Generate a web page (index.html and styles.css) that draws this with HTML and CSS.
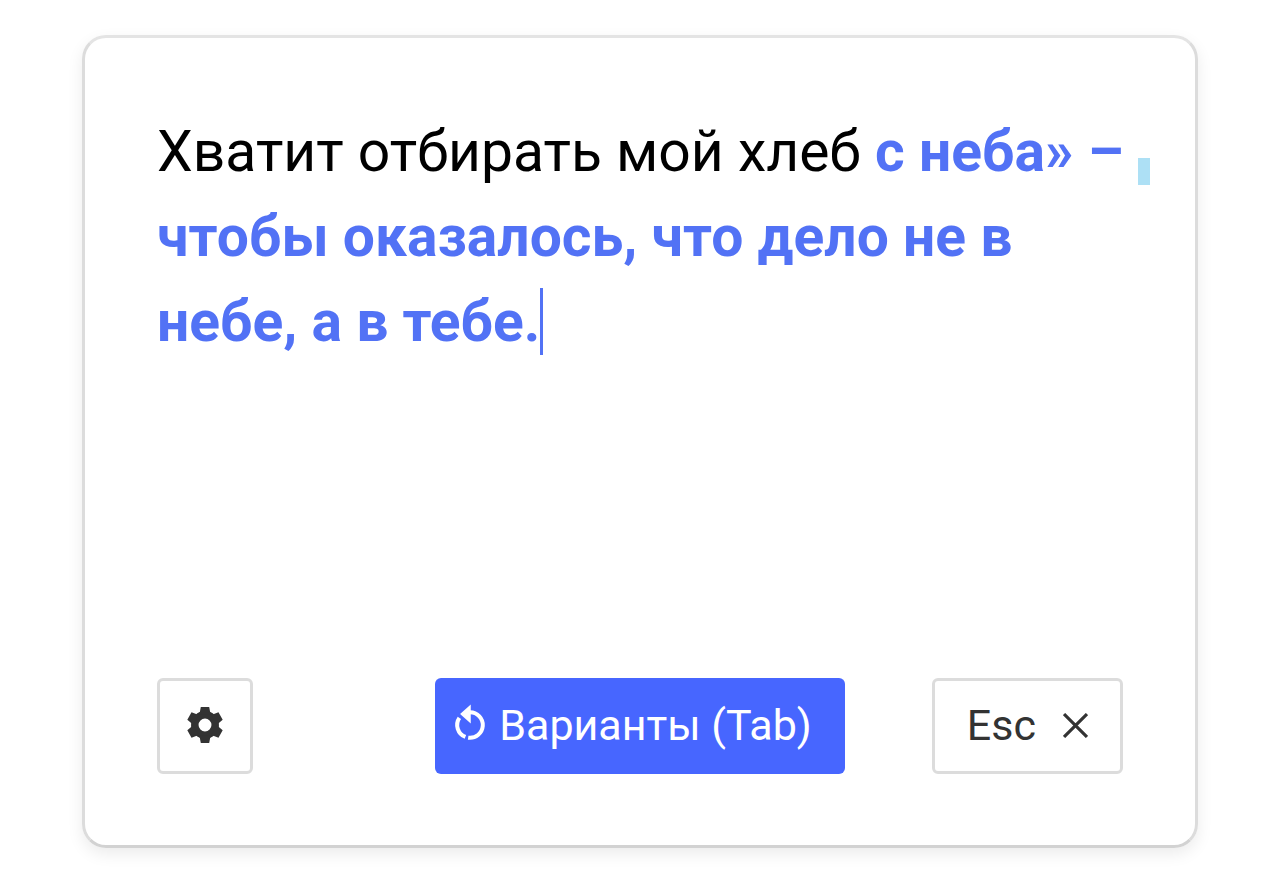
FILE: index.html
```html
<!DOCTYPE html>
<html lang="ru">
<head>
  <meta charset="UTF-8">
  <meta name="viewport" content="width=device-width, initial-scale=1.0">
  <title>Варианты</title>
  <link rel="stylesheet" href="styles.css">
</head>
<body>
<main class="card">
  <div class="editor" role="textbox" aria-multiline="true" aria-label="Текст" contenteditable="true" spellcheck="false">Хватит отбирать мой хлеб <b class="generated">с неба» – чтобы оказалось, что дело не в небе, а в тебе.</b><span class="caret"></span></div>
  <span class="marker"></span>
  <div class="toolbar">
    <button class="btn btn-settings" type="button" aria-label="Настройки">
      <svg class="icon-gear" viewBox="-12 -12 24 24" aria-hidden="true">
        <circle r="6.8" fill="none" stroke="currentColor" stroke-width="5"/>
        <g fill="currentColor">
          <path id="tooth" d="M-2.8-12h5.6L3.5-8.4l1 1.4h-9l1-1.4z"/>
          <use href="#tooth" transform="rotate(60)"/>
          <use href="#tooth" transform="rotate(120)"/>
          <use href="#tooth" transform="rotate(180)"/>
          <use href="#tooth" transform="rotate(240)"/>
          <use href="#tooth" transform="rotate(300)"/>
        </g>
      </svg>
    </button>
    <button class="btn btn-primary" type="button">
      <svg class="icon-rotate" viewBox="0 0 24 24" aria-hidden="true">
        <path fill="none" stroke="currentColor" stroke-width="2.2" d="M12 5a7 7 0 1 1-1 13.93M9.5 18.54A7 7 0 0 1 6.2 8.1"/>
        <path fill="currentColor" d="M12.4.8v10.4L6.6 6z"/>
      </svg>
      Варианты (Tab)
    </button>
    <button class="btn btn-close" type="button">
      Esc
      <svg class="icon-close" viewBox="0 0 24 24" aria-hidden="true">
        <path fill="none" stroke="currentColor" stroke-width="3" d="M1 1l22 22M23 1L1 23"/>
      </svg>
    </button>
  </div>
</main>
</body>
</html>
```
FILE: styles.css
```css
:root {
  --primary: #4766ff;
  --generated: #5272f5;
  --border: #dcdcdc;
  --text: #333;
}
* {
  box-sizing: border-box;
}
body {
  margin: 0;
  padding: 35px 82px 48px;
  min-height: 100vh;
  display: flex;
  background: #fff;
  font-family: Roboto, "Liberation Sans", sans-serif;
}
.card {
  position: relative;
  flex: 1;
  display: flex;
  flex-direction: column;
  padding: 71px 72px;
  border: 3px solid;
  border-color: #e4e4e4 var(--border) #d2d2d2;
  border-radius: 24px;
  box-shadow: 0 6px 16px rgba(0, 0, 0, 0.08);
}
.editor {
  flex: 1;
  margin-right: -16px;
  font-size: 57px;
  line-height: 85px;
  color: #000;
  outline: none;
}
.generated {
  font-weight: 700;
  color: var(--generated);
}
.caret {
  display: inline-block;
  width: 3px;
  height: 67px;
  vertical-align: text-bottom;
  background: var(--generated);
}
.marker {
  position: absolute;
  top: 120px;
  right: 45px;
  width: 12px;
  height: 27px;
  background: #ade0f5;
}
.toolbar {
  display: grid;
  grid-template-columns: 1fr auto 1fr;
  align-items: center;
}
.btn {
  display: flex;
  align-items: center;
  height: 96px;
  padding: 0 32px 2px;
  font-family: inherit;
  font-size: 43px;
  color: var(--text);
  background: #fff;
  border: 3px solid var(--border);
  border-radius: 6px;
  cursor: pointer;
}
.btn-settings {
  justify-content: center;
  width: 96px;
  padding: 0 0 2px;
}
.btn-primary {
  gap: 7px;
  padding: 0 33px 2px 13px;
  color: #fff;
  background: var(--primary);
  border: none;
}
.btn-close {
  justify-self: end;
  gap: 27px;
}
.icon-gear {
  width: 36px;
  height: 36px;
}
.icon-rotate {
  width: 44px;
  height: 44px;
}
.icon-close {
  width: 25px;
  height: 25px;
}
```
